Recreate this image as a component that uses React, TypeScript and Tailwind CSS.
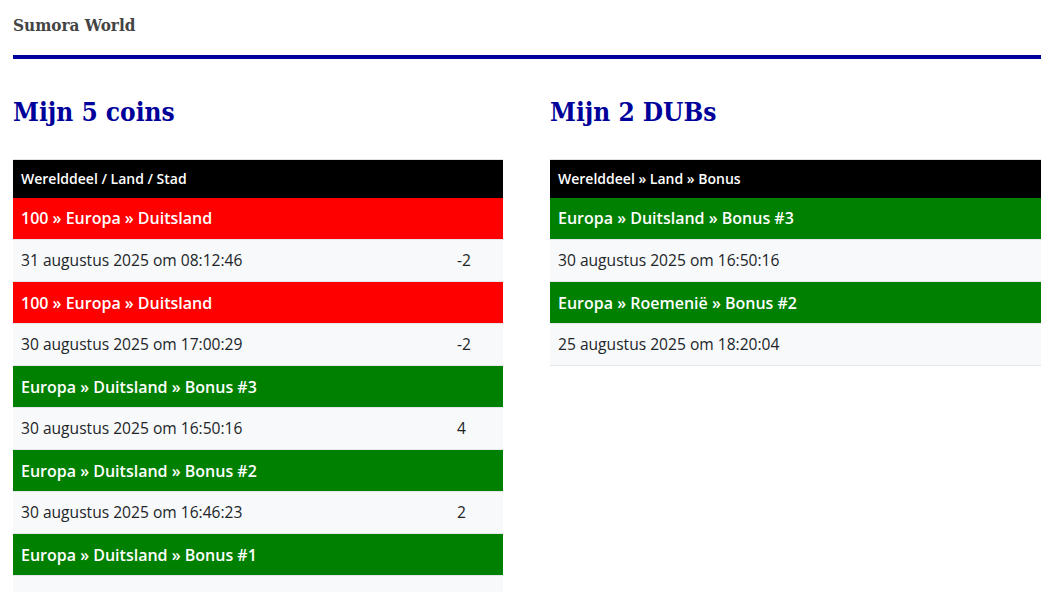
import React from "react";

type Row = { title: string; color: "red" | "green"; date?: string; value?: string };

const coins: Row[] = [
  { title: "100 » Europa » Duitsland", color: "red", date: "31 augustus 2025 om 08:12:46", value: "-2" },
  { title: "100 » Europa » Duitsland", color: "red", date: "30 augustus 2025 om 17:00:29", value: "-2" },
  { title: "Europa » Duitsland » Bonus #3", color: "green", date: "30 augustus 2025 om 16:50:16", value: "4" },
  { title: "Europa » Duitsland » Bonus #2", color: "green", date: "30 augustus 2025 om 16:46:23", value: "2" },
  // date row below the fold in the screenshot
  { title: "Europa » Duitsland » Bonus #1", color: "green" },
];

const dubs: Row[] = [
  { title: "Europa » Duitsland » Bonus #3", color: "green", date: "30 augustus 2025 om 16:50:16" },
  { title: "Europa » Roemenië » Bonus #2", color: "green", date: "25 augustus 2025 om 18:20:04" },
];

function Table({ head, rows, withValue }: { head: string; rows: Row[]; withValue: boolean }) {
  return (
    <table className="w-full border-collapse font-['Open_Sans',sans-serif] text-[15.6px]">
      <thead>
        <tr className="border-t border-[#dee2e6] bg-black text-white">
          <th colSpan={withValue ? 2 : 1} className="h-[38px] px-2 text-left text-[14px] font-semibold">
            {head}
          </th>
        </tr>
      </thead>
      <tbody>
        {rows.map((r, i) => (
          <React.Fragment key={i}>
            <tr className={r.color === "red" ? "bg-[#ff0000] text-white" : "bg-[#008000] text-white"}>
              <td colSpan={withValue ? 2 : 1} className="h-[42px] border-b border-[#e5e7eb] px-2 text-[16px] font-semibold">
                {r.title}
              </td>
            </tr>
            <tr className="bg-[#f8f9fa] text-[#212529]">
              <td className="h-[42px] border-b border-[#e5e7eb] px-2">{r.date}</td>
              {withValue && <td className="w-[54px] border-b border-[#e5e7eb] px-2">{r.value}</td>}
            </tr>
          </React.Fragment>
        ))}
      </tbody>
    </table>
  );
}

export default function App() {
  return (
    <div className="min-h-screen bg-white pl-[13px] pr-[11px] pt-[13px] font-['DejaVu_Serif_Condensed','DejaVu_Serif',serif]">
      <div className="text-[17px] font-bold leading-[24px] text-[#444]">Sumora World</div>
      <div className="mt-[18px] h-[4px] bg-[#00009a]" />
      <div className="mt-[34px] grid grid-cols-[490px_1fr] gap-[47px]">
        <section>
          <h1 className="mb-[28px] text-[26px] font-bold leading-[38px] text-[#00009a]">Mijn 5 coins</h1>
          <Table head="Werelddeel / Land / Stad" rows={coins} withValue />
        </section>
        <section>
          <h1 className="mb-[28px] text-[26px] font-bold leading-[38px] text-[#00009a]">Mijn 2 DUBs</h1>
          <Table head="Werelddeel » Land » Bonus" rows={dubs} withValue={false} />
        </section>
      </div>
    </div>
  );
}
